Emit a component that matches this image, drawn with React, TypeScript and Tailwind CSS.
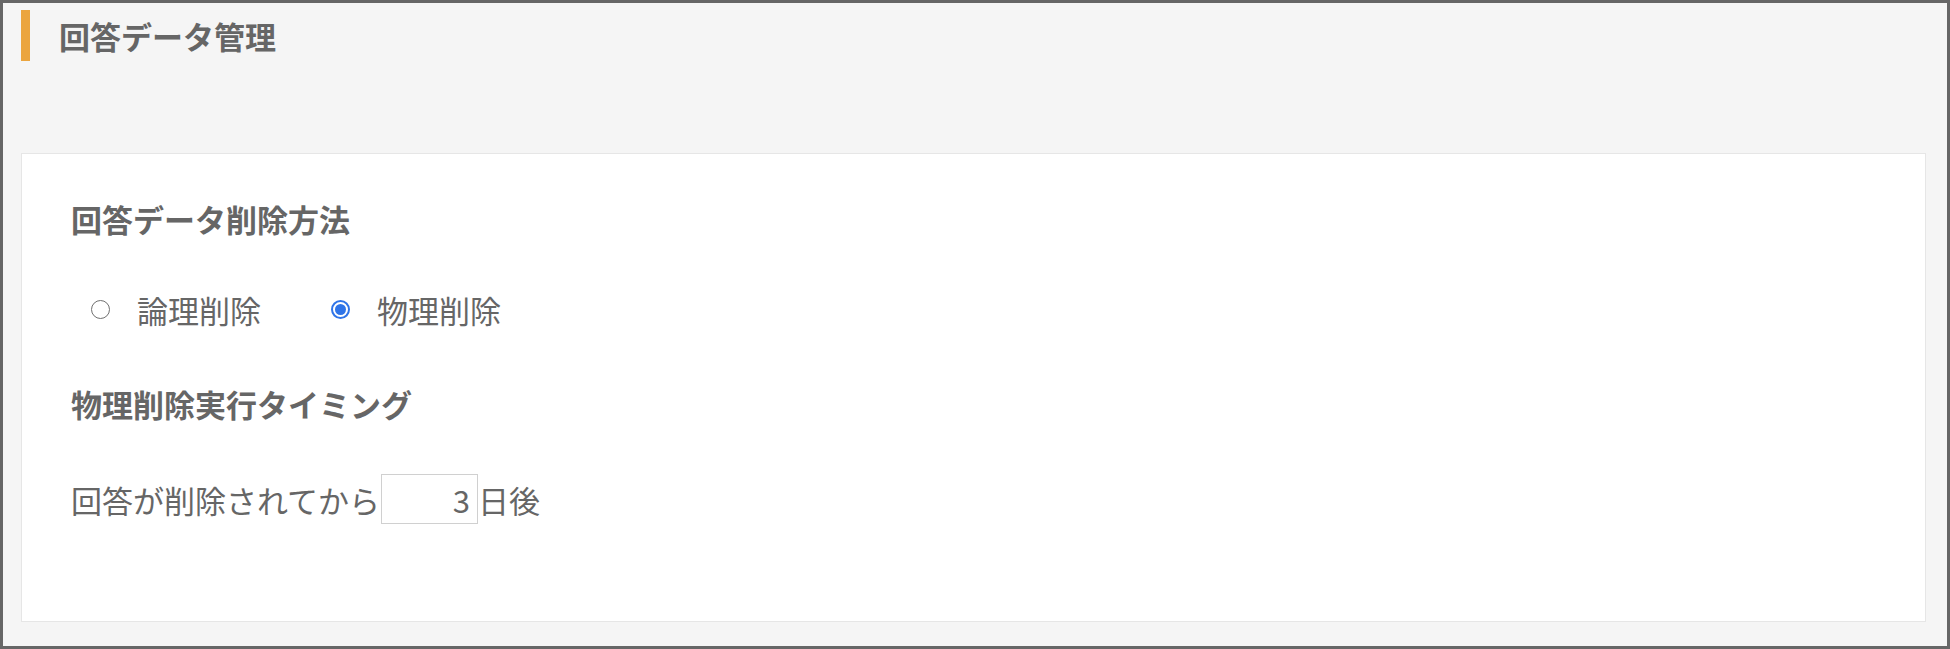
import { useState } from "react";

const font = { fontFamily: '"Noto Sans CJK JP", "Noto Sans", sans-serif' };

const Radio: React.FC<{ checked: boolean; label: string; onClick: () => void }> = ({ checked, label, onClick }) => {
  return (
    <button className="flex items-center gap-[27px] text-[31px] leading-[45px] text-[#666]" onClick={onClick}>
      {checked ? (
        <span className="flex items-center justify-center w-[19px] h-[19px] rounded-full border-2 border-[#2f74e8] bg-white">
          <span className="w-[11px] h-[11px] rounded-full bg-[#2f74e8]" />
        </span>
      ) : (
        <span className="w-[19px] h-[19px] rounded-full border-[1.5px] border-[#707070] bg-white" />
      )}
      <span>{label}</span>
    </button>
  );
};

const App: React.FC = () => {
  const [mode, setMode] = useState<"logical" | "physical">("physical");
  const [days, setDays] = useState("3");

  return (
    <div
      className="w-[1950px] h-[649px] border-[3px] border-[#666] bg-[#f5f5f5] flex flex-col"
      style={font}
    >
      <div className="flex items-center pl-[18px] pt-[7px]">
        <div className="w-[9px] h-[51px] bg-[#eba53f]" />
        <h1 className="ml-[29px] text-[31px] font-bold text-[#666] leading-[51px]">回答データ管理</h1>
      </div>

      <div className="mt-[92px] ml-[18px] mr-[21px] mb-[24px] flex-1 bg-white border border-[#e6e6e6] pl-[49px] pt-[42px]">
        <h2 className="text-[31px] font-bold text-[#666] leading-[45px]">回答データ削除方法</h2>

        <div className="mt-[46px] ml-[20px] flex items-center gap-[70px]">
          <Radio checked={mode === "logical"} label="論理削除" onClick={() => setMode("logical")} />
          <Radio checked={mode === "physical"} label="物理削除" onClick={() => setMode("physical")} />
        </div>

        <h2 className="mt-[49px] text-[31px] font-bold text-[#666] leading-[45px]">物理削除実行タイミング</h2>

        <div className="mt-[48px] flex items-center text-[31px] text-[#666] leading-[45px]">
          <span>回答が削除されてから</span>
          <input
            className="ml-[1px] w-[97px] h-[50px] border border-[#d0d0d0] text-right pr-[7px] text-[31px] text-[#666] outline-none"
            style={font}
            value={days}
            onChange={(e) => setDays(e.target.value)}
          />
          <span>日後</span>
        </div>
      </div>
    </div>
  );
};

export default App;
